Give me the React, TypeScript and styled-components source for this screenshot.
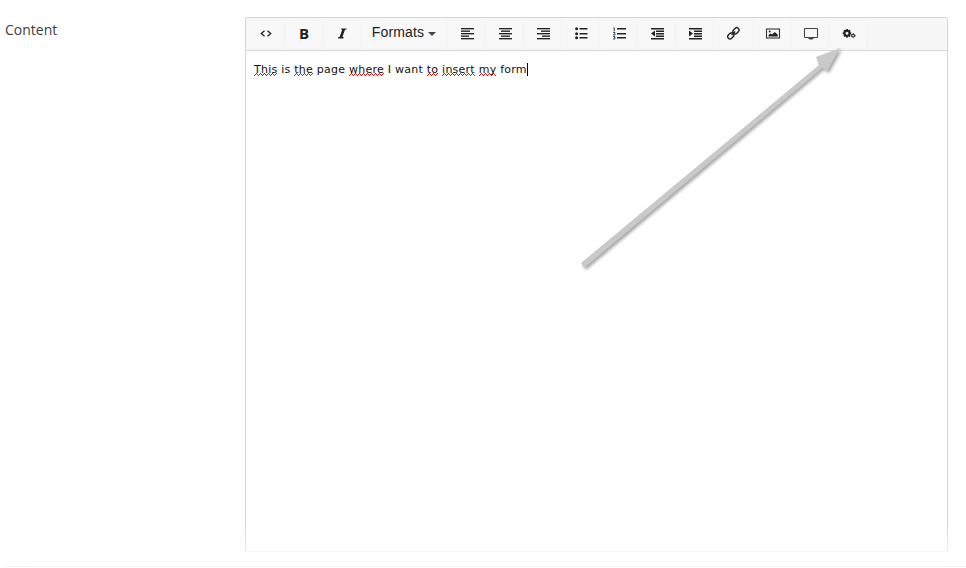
import React from "react";
import styled, { createGlobalStyle } from "styled-components";

const Global = createGlobalStyle`
  * { box-sizing: border-box; }
  body { margin: 0; background: #fff; }
`;

const Page = styled.main`
  position: relative;
  display: flex;
  width: 966px;
  height: 568px;
  overflow: hidden;
  background: #fff;
`;

const FieldLabel = styled.label`
  width: 245px;
  padding: 20px 0 0 5px;
  font: 14px/20px "Open Sans", sans-serif;
  color: #404040;
`;

const Editor = styled.section`
  display: flex;
  flex-direction: column;
  width: 703px;
  height: 535px;
  margin-top: 17px;
  border: 1px solid #d6d6d6;
  border-bottom-color: #f0f0f0;
  border-radius: 2px;
`;

const Toolbar = styled.div`
  display: flex;
  height: 33px;
  flex: none;
  padding-left: 1px;
  background: #f7f7f7;
  border-bottom: 1px solid #d6d6d6;
`;

const ToolButton = styled.button<{ $width?: number }>`
  display: flex;
  align-items: center;
  justify-content: center;
  width: ${(p) => p.$width ?? 38}px;
  height: 28px;
  margin: 3px 0 0;
  padding: 0;
  border: 0;
  border-right: 1px solid #f3f3f3;
  border-bottom: 1px solid #f3f3f3;
  border-radius: 4px;
  background: #f8f8f8;
  color: #222;
`;

const Formats = styled.span`
  display: flex;
  align-items: center;
  gap: 4px;
  margin-top: -5px;
  font: 14px/18px "Liberation Sans", Arial, sans-serif;
  letter-spacing: 0.15px;
`;

const Caret = styled.i`
  margin-top: 4px;
  border: 4px solid transparent;
  border-top-color: #444;
  border-bottom: 0;
`;

const Letter = styled.span`
  margin-top: -4px;
  padding-left: 1px;
  font: 700 15px/16px "Open Sans", sans-serif;
`;

const Icon = styled.svg`
  display: block;
  width: 16px;
  height: 16px;
  margin-top: -1px;
`;

const TextArea = styled.div`
  display: flex;
  padding: 11px 8px;
  flex: 1;
  font: 11px/16px "DejaVu Sans", Verdana, sans-serif;
  letter-spacing: 0.245px;
  color: #111;
  white-space: pre;
`;

const Sentence = styled.p`
  height: 16px;
  margin: 0;
`;

const squiggle = encodeURIComponent(
  '<svg xmlns="http://www.w3.org/2000/svg" width="4" height="3" fill="#ff0000" shape-rendering="crispEdges"><path d="M0 2h1v1H0zM1 1h1v1H1zM2 0h1v1H2zM3 1h1v1H3z"/></svg>'
);

const Misspelled = styled.span`
  background: url("data:image/svg+xml,${squiggle}") 0 100% repeat-x;
`;

const TextCursor = styled.span`
  width: 1px;
  height: 13px;
  margin-top: 1px;
  background: #000;
`;

const BottomRule = styled.div`
  position: absolute;
  left: 5px;
  right: 0;
  top: 566px;
  height: 1px;
  background: #f5f5f5;
`;

const BottomFade = styled.div`
  position: absolute;
  left: 26px;
  width: 922px;
  top: 528px;
  height: 36px;
  background: linear-gradient(rgba(253, 253, 253, 0.1), rgba(253, 253, 253, 0.75));
`;

const Pointer = styled.svg`
  position: absolute;
  left: 570px;
  top: 40px;
  width: 290px;
  height: 240px;
  filter: drop-shadow(2px 2px 1.5px rgba(0, 0, 0, 0.34));
`;

type Tool = { name: string; width?: number; art?: React.ReactNode; letter?: string };

const line = (x: number, y: number, w: number, h = 1.5) => (
  <rect key={`${x}-${y}`} x={x} y={y} width={w} height={h} fill="#222" />
);
const rows = (spans: [number, number][]) => spans.map(([x, w], i) => line(x, 2 + i * 2.5, w, 1.35));

const indentRows = (
  <>
    {line(2, 2, 13)}
    {[4.5, 7, 9.5].map((y) => line(7, y, 8))}
    {line(2, 12, 13)}
  </>
);

const teeth = Array.from({ length: 8 }, (_, i) => (
  <rect key={i} x="5.1" y="3" width="1.8" height="2.2" transform={`rotate(${i * 45} 6 7.3)`} />
));

const tools: Tool[] = [
  { name: "Source", art: <path d="M6.5 4.8 3.3 7.5l3.2 2.7M9.5 4.8l3.2 2.7-3.2 2.7" fill="none" stroke="#222" strokeWidth="1.3" /> },
  { name: "Bold", letter: "B" },
  { name: "Italic", art: <path d="M7.3 2.5h5.4l-.3 1.1-1.4.2-2.6 7.3 1.3.2-.3 1.2H3.8l.3-1.2 1.5-.2 2.6-7.3-1.2-.2z" /> },
  { name: "Formats", width: 87 },
  { name: "Align left", art: rows([[2, 13], [2, 9], [2, 13], [2, 8], [2, 13]]) },
  { name: "Align center", art: rows([[2, 13], [4, 9], [2, 13], [4, 9], [2, 13]]) },
  { name: "Align right", art: rows([[2, 13], [6, 9], [2, 13], [7, 8], [2, 13]]) },
  { name: "Bullets", art: <>{[2, 7, 11].map((y) => <React.Fragment key={y}><circle cx="3.6" cy={y + 0.8} r="1.5" />{line(6.5, y, 8)}</React.Fragment>)}</> },
  { name: "Numbers", art: <>{[2, 7, 11].map((y) => line(6, y, 9))}<path d="M2.3 2.3 3.3 1.8V5M2 6.3h2v1L2.5 8.7h2M2 10.3h2L3.2 11.5H4V13H2" fill="none" stroke="#345" strokeWidth="1" /></> },
  { name: "Outdent", art: <>{indentRows}<path d="M6 4.5v6L2 7.5z" /></> },
  { name: "Indent", art: <>{indentRows}<path d="M2 4.5v6l4-3z" /></> },
  { name: "Link", width: 40, art: <g transform="translate(-.5 -.5) rotate(-45 8 8)" fill="none" stroke="#222" strokeWidth="1.4"><rect x="1" y="5.5" width="6.7" height="4.6" rx="2.3" /><rect x="8.3" y="5.5" width="6.7" height="4.6" rx="2.3" /><path d="M5.5 7.8h5" /></g> },
  { name: "Image", art: <><rect x="1.5" y="3" width="13" height="9" fill="none" stroke="#333" strokeWidth="1.1" /><circle cx="4.7" cy="5.5" r="1" /><path d="M3.5 10.5V9l2-1.5L7 8.5 9.8 6l3 2.7v1.8z" /></> },
  { name: "Media", art: <><rect x="1.5" y="2.5" width="13" height="9" rx=".5" fill="none" stroke="#444" strokeWidth="1.1" /><path d="M5 12h6l-1.5 1.5h-3z" fill="#444" /></> },
  { name: "Insert form", art: <><circle cx="6" cy="7.3" r="2.5" fill="none" stroke="#222" strokeWidth="2" />{teeth}<circle cx="12.1" cy="9.6" r="1.4" fill="none" stroke="#222" strokeWidth="1.1" /><circle cx="12.1" cy="9.6" r="2.1" fill="none" stroke="#222" strokeWidth=".7" strokeDasharray="1 1.2" /></> },
];

const words = "This is the page where I want to insert my form".split(" ");
const marked = new Set([0, 2, 4, 7, 8, 9]);

export default function App() {
  return (
    <>
      <Global />
      <Page>
        <FieldLabel>Content</FieldLabel>
        <Editor>
          <Toolbar>
            {tools.map(({ name, width, art, letter }) => (
              <ToolButton key={name} $width={width} aria-label={name}>
                {letter && <Letter>{letter}</Letter>}
                {art && <Icon viewBox="0 0 16 16" fill="#222">{art}</Icon>}
                {name === "Formats" && <Formats>Formats<Caret /></Formats>}
              </ToolButton>
            ))}
          </Toolbar>
          <TextArea>
            <Sentence>
              {words.map((word, i) => (
                <React.Fragment key={i}>
                  {i > 0 && " "}
                  {marked.has(i) ? <Misspelled>{word}</Misspelled> : word}
                </React.Fragment>
              ))}
            </Sentence>
            <TextCursor />
          </TextArea>
        </Editor>
        <BottomFade />
        <BottomRule />
        <Pointer viewBox="0 0 290 240" fill="#c9c9c9">
          <path d="M11 223 249 25 246 17 270 8 257 31 252 28 14 228z" />
        </Pointer>
      </Page>
    </>
  );
}
